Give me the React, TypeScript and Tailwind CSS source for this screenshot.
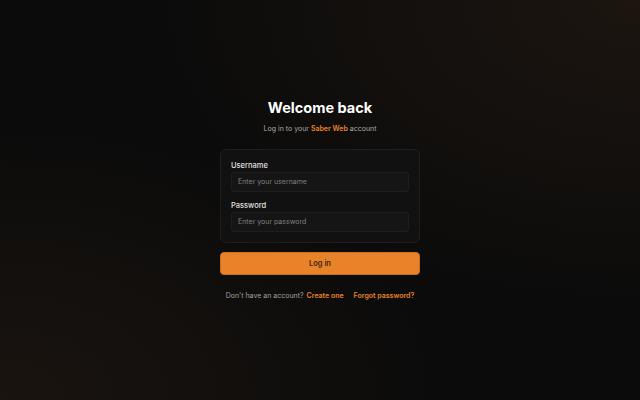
import React from "react";

export default function App() {
  return (
    <div
      className="relative w-[640px] h-[400px] overflow-hidden bg-[#0b0b0b] flex flex-col items-center"
      style={{ fontFamily: "Inter, 'Liberation Sans', sans-serif" }}
    >
      <div className="absolute inset-0 bg-[radial-gradient(ellipse_at_100%_0%,rgba(60,40,25,0.35),transparent_55%)]" />
      <div className="absolute inset-0 bg-[radial-gradient(ellipse_at_0%_100%,rgba(60,40,25,0.3),transparent_50%)]" />
      <div className="relative flex flex-col items-center pt-[97px]">
        <h1 className="text-[14.5px] leading-[22px] font-bold text-white">Welcome back</h1>
        <p className="mt-[4px] text-[7px] leading-[11px] text-[#a8a8a8]">
          Log in to your <span className="text-[#e8832a] font-semibold">Saber Web</span> account
        </p>
        <div className="mt-[15px] w-[200px] rounded-[6px] border border-[#1e1e1e] bg-[#111111] px-[10px] pt-[10px] pb-[10px] flex flex-col">
          <label className="text-[7.5px] leading-[11px] font-medium text-[#e0e0e0]">Username</label>
          <div className="mt-[1px] h-[20px] rounded-[3px] border border-[#1e1e1e] bg-[#151515] flex items-center px-[6px] text-[7px] text-[#808080]">
            Enter your username
          </div>
          <label className="mt-[8px] text-[7.5px] leading-[11px] font-medium text-[#e0e0e0]">Password</label>
          <div className="mt-[1px] h-[20px] rounded-[3px] border border-[#1e1e1e] bg-[#151515] flex items-center px-[6px] text-[7px] text-[#808080]">
            Enter your password
          </div>
        </div>
        <button className="mt-[9px] w-[200px] h-[23px] rounded-[4px] bg-[#e8832a] border border-[#c96f1f] text-[7.5px] font-semibold text-[#3a2410] flex items-center justify-center">
          Log in
        </button>
        <div className="mt-[15px] flex items-center text-[7px] leading-[11px]">
          <span className="text-[#a0a0a0]">Don&apos;t have an account?</span>
          <span className="ml-[3px] text-[#e8832a] font-semibold">Create one</span>
          <span className="ml-[10px] text-[#e8832a] font-semibold">Forgot password?</span>
        </div>
      </div>
    </div>
  );
}
